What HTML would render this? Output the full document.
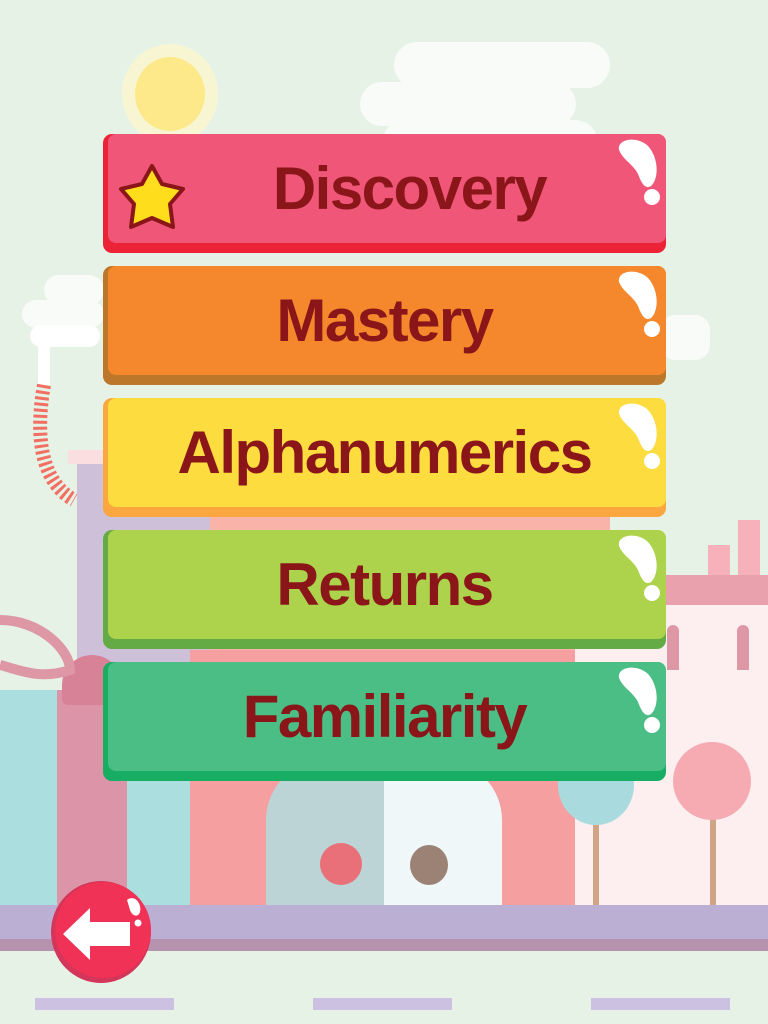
<!DOCTYPE html>
<html><head><meta charset="utf-8"><style>
*{margin:0;padding:0;box-sizing:border-box}
body{width:768px;height:1024px;overflow:hidden;background:#e7f2e6;position:relative;font-family:"Liberation Sans",sans-serif}
.a{position:absolute}
.btn{position:absolute;left:103px;width:563px;height:119px;border-radius:9px}
.btn .in{position:absolute;left:5px;top:0;right:0;bottom:10px;border-radius:8px}
.btn span{position:absolute;left:0;right:0;top:23px;text-align:center;font-weight:bold;font-size:60px;color:#8a161a;letter-spacing:-1.5px;line-height:64px}
.btn svg{position:absolute;left:0;top:0}
</style></head><body>
<!-- sky -->
<div class="a" style="left:122px;top:44px;width:96px;height:100px;border-radius:50%;background:#f8f6d2"></div>
<div class="a" style="left:135px;top:57px;width:70px;height:74px;border-radius:50%;background:#fde989"></div>
<div class="a" style="left:394px;top:42px;width:216px;height:46px;border-radius:23px;background:#f8fbf8"></div>
<div class="a" style="left:360px;top:82px;width:216px;height:44px;border-radius:22px;background:#f8fbf8"></div>
<div class="a" style="left:382px;top:120px;width:216px;height:46px;border-radius:23px;background:#f8fbf8"></div>
<div class="a" style="left:44px;top:275px;width:60px;height:30px;border-radius:15px;background:#f8fbf8"></div>
<div class="a" style="left:22px;top:300px;width:82px;height:28px;border-radius:14px;background:#f8fbf8"></div>
<div class="a" style="left:30px;top:325px;width:70px;height:22px;border-radius:11px;background:#fff"></div>
<div class="a" style="left:38px;top:345px;width:12px;height:40px;background:#fff"></div>
<div class="a" style="left:660px;top:315px;width:50px;height:45px;border-radius:15px;background:#f8fbf8"></div>
<svg class="a" style="left:28px;top:380px" width="50" height="130"><path d="M16 5 C8 50 10 100 46 120" fill="none" stroke="#f26f63" stroke-width="14" stroke-dasharray="3 3"/></svg>
<!-- buildings -->
<div class="a" style="left:77px;top:460px;width:140px;height:450px;background:#cfc0da"></div>
<div class="a" style="left:68px;top:450px;width:40px;height:14px;background:#fbdfe0"></div>
<div class="a" style="left:210px;top:500px;width:400px;height:420px;background:#f9b3a8"></div>
<div class="a" style="left:190px;top:650px;width:390px;height:270px;background:#f59fa1"></div>
<div class="a" style="left:266px;top:760px;width:118px;height:150px;background:#bcd4d5;border-radius:60px 0 0 0"></div>
<div class="a" style="left:384px;top:760px;width:118px;height:150px;background:#eff7f8;border-radius:0 60px 0 0"></div>
<div class="a" style="left:320px;top:843px;width:42px;height:42px;border-radius:50%;background:#e96f79"></div>
<div class="a" style="left:410px;top:845px;width:38px;height:40px;border-radius:50%;background:#9b8274"></div>
<div class="a" style="left:575px;top:595px;width:193px;height:320px;background:#fdeef0"></div>
<div class="a" style="left:665px;top:575px;width:103px;height:30px;background:#e9a1ad"></div>
<div class="a" style="left:708px;top:545px;width:22px;height:30px;background:#f6b1ba"></div>
<div class="a" style="left:738px;top:520px;width:22px;height:55px;background:#f6b1ba"></div>
<div class="a" style="left:667px;top:625px;width:12px;height:45px;border-radius:6px 6px 0 0;background:#de97a5"></div>
<div class="a" style="left:737px;top:625px;width:12px;height:45px;border-radius:6px 6px 0 0;background:#de97a5"></div>
<div class="a" style="left:0;top:690px;width:190px;height:220px;background:#abdede"></div>
<div class="a" style="left:57px;top:690px;width:70px;height:220px;background:#dc95a8"></div>
<div class="a" style="left:62px;top:655px;width:60px;height:50px;border-radius:30px 30px 6px 6px;background:#d88298"></div>
<svg class="a" style="left:0;top:610px" width="110" height="80"><path d="M0 10 C40 10 70 40 70 60 C40 70 20 60 0 55" fill="none" stroke="#de97a5" stroke-width="10"/></svg>
<div class="a" style="left:593px;top:742px;width:6px;height:175px;background:#cfa585"></div>
<div class="a" style="left:558px;top:745px;width:76px;height:80px;border-radius:50%;background:#a9dbde"></div>
<div class="a" style="left:710px;top:800px;width:6px;height:117px;background:#cfa585"></div>
<div class="a" style="left:673px;top:742px;width:78px;height:78px;border-radius:50%;background:#f6abb2"></div>
<!-- ground -->
<div class="a" style="left:0;top:905px;width:768px;height:34px;background:#bbb0d4"></div>
<div class="a" style="left:0;top:939px;width:768px;height:12px;background:#b593af"></div>
<div class="a" style="left:35px;top:998px;width:139px;height:12px;background:#cdc1e1"></div>
<div class="a" style="left:313px;top:998px;width:139px;height:12px;background:#cdc1e1"></div>
<div class="a" style="left:591px;top:998px;width:139px;height:12px;background:#cdc1e1"></div>

<!-- buttons -->
<div class="btn" style="top:134px;background:#ec2236"><div class="in" style="background:#ef5677"></div><span style="left:50px">Discovery</span>
<svg width="563" height="119"><path d="M516 16 C514 4 535 2 545 12 C556 24 556 45 548 52 C542 56 538 48 535 40 C530 30 520 26 516 16 Z" fill="#fff"/><circle cx="549" cy="63" r="8" fill="#fff"/>
<path d="M49 32 L59 50 L80 55 L67 70 L70 93 L49 84 L28 93 L31 70 L18 55 L39 50 Z" fill="#fedd1c" stroke="#8a1619" stroke-width="4" stroke-linejoin="round"/></svg></div>
<div class="btn" style="top:266px;background:#bc772b"><div class="in" style="background:#f5882c"></div><span>Mastery</span>
<svg width="563" height="119"><path d="M516 16 C514 4 535 2 545 12 C556 24 556 45 548 52 C542 56 538 48 535 40 C530 30 520 26 516 16 Z" fill="#fff"/><circle cx="549" cy="63" r="8" fill="#fff"/></svg></div>
<div class="btn" style="top:398px;background:#fba73f"><div class="in" style="background:#fddc40"></div><span>Alphanumerics</span>
<svg width="563" height="119"><path d="M516 16 C514 4 535 2 545 12 C556 24 556 45 548 52 C542 56 538 48 535 40 C530 30 520 26 516 16 Z" fill="#fff"/><circle cx="549" cy="63" r="8" fill="#fff"/></svg></div>
<div class="btn" style="top:530px;background:#64ab45"><div class="in" style="background:#acd34b"></div><span>Returns</span>
<svg width="563" height="119"><path d="M516 16 C514 4 535 2 545 12 C556 24 556 45 548 52 C542 56 538 48 535 40 C530 30 520 26 516 16 Z" fill="#fff"/><circle cx="549" cy="63" r="8" fill="#fff"/></svg></div>
<div class="btn" style="top:662px;background:#17ad63"><div class="in" style="background:#4bbe85"></div><span>Familiarity</span>
<svg width="563" height="119"><path d="M516 16 C514 4 535 2 545 12 C556 24 556 45 548 52 C542 56 538 48 535 40 C530 30 520 26 516 16 Z" fill="#fff"/><circle cx="549" cy="63" r="8" fill="#fff"/></svg></div>

<!-- back button -->
<svg class="a" style="left:50px;top:880px" width="104" height="104">
<ellipse cx="51" cy="52" rx="50" ry="51" fill="#d4365a"/>
<ellipse cx="53" cy="50" rx="48" ry="48" fill="#ef3256"/>
<path d="M13 54 L40 28 L40 42 L80 42 L80 66 L40 66 L40 80 Z" fill="#fff"/>
<path d="M77 20 C85 14 92 24 90 32 C88 38 82 36 80 30 Z" fill="#fff"/><circle cx="88" cy="43" r="3.5" fill="#fff"/>
</svg>
</body></html>
